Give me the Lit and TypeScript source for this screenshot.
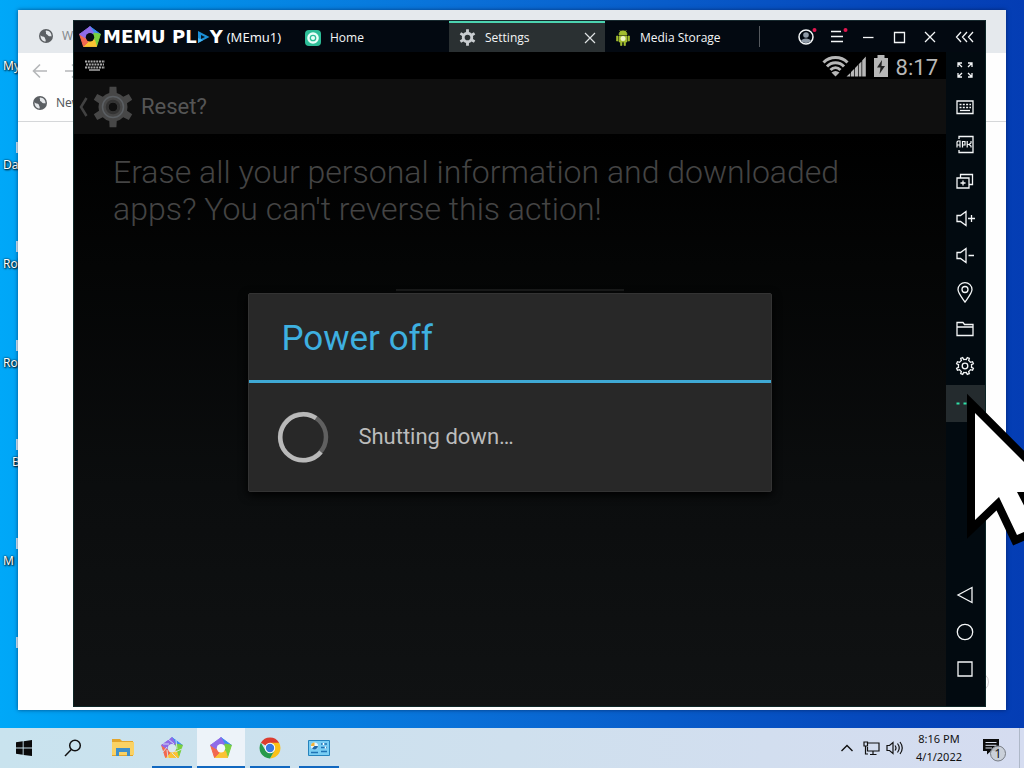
import { LitElement, html, css, svg } from "lit";
import { customElement } from "lit/decorators.js";
import { classMap } from "lit/directives/class-map.js";

/** Outline of a cog wheel centred on (c, c). */
function cog(c: number, outer: number, inner: number, teeth: number, turn = 0): string {
  const step = (Math.PI * 2) / teeth;
  const pt = (r: number, a: number) =>
    `${(c + r * Math.sin(a)).toFixed(2)} ${(c - r * Math.cos(a)).toFixed(2)}`;
  let d = "";
  for (let i = 0; i < teeth; i++) {
    const a = turn + i * step;
    d += `${i ? "L" : "M"}${pt(inner, a - step * 0.25)}L${pt(outer, a - step * 0.16)}`;
    d += `L${pt(outer, a + step * 0.16)}L${pt(inner, a + step * 0.25)}`;
    d += `A${inner} ${inner} 0 0 1 ${pt(inner, a + step * 0.75)}`;
  }
  return d + "Z";
}

const pentagon = (hole: string, streaks = false) => html`<svg width="24" height="24" viewBox="0 0 24 24" aria-hidden="true">
  <g stroke-linejoin="round" stroke-width="1">
    <path d="M12 1.6 22.4 9.2 16 12 9 7z" fill="#3c8df2" stroke="#3c8df2" />
    <path d="M22.4 9.2 18.5 21.4 12 18 15.5 8z" fill="#7ad03f" stroke="#7ad03f" />
    <path d="M18.5 21.4 5.5 21.4 8 14.5 16.5 15z" fill="#fbc233" stroke="#fbc233" />
    <path d="M5.5 21.4 1.6 9.2 7.5 9 10 17z" fill="#f2694f" stroke="#f2694f" />
    <path d="M1.6 9.2 12 1.6 15.5 8 7.5 13z" fill="#8f6be8" stroke="#8f6be8" />
  </g>
  ${streaks
    ? svg`<path d="M8 3 14 8M16 4 17 13M22 13 15 16M17 22 12 17M8 22 7 14M3 16 7 11M3 8 9 8" stroke="#d6e7ef" stroke-width=".9" fill="none" />`
    : null}
  <circle cx="12" cy="12.2" r="4.2" fill=${hole} />
</svg>`;

const globe = html`<svg width="16" height="16" viewBox="0 0 16 16" aria-hidden="true">
  <circle cx="8" cy="8" r="7" fill="#5b5f63" />
  <path d="M2.500 7.200C4 9 6.500 8 6.800 9.700 7 11 8 11 7.700 13.600 4.500 13.500 2.400 10.500 2.500 7.200zM8 2.400C7 3.500 8.500 4 8 5.200 7.500 6.300 9.500 6.200 10 7.500 11 9 12.500 7.500 13.500 8.500 13.800 5 11.500 2.500 8 2.400z" fill="#e4e7ea" />
</svg>`;

const line = (content: unknown) => html`<svg width="22" height="22" viewBox="0 0 22 22" fill="none" stroke="#f4f6f7" stroke-width="1.3" aria-hidden="true">${content}</svg>`;

const sideTools = [
  { name: "Full screen", art: svg`<path d="M4 8V4H8M4 4 8 8M14 4H18V8M18 4 14 8M4 14V18H8M4 18 8 14M18 14V18H14M18 18 14 14" />` },
  { name: "Keyboard mapping", art: svg`<path d="M3 5H19V17.500H3z" /><path d="M5.500 8.500H17M5.500 11.500H17" stroke-dasharray="2 1.300" /><path d="M6 14.500H16" />` },
  { name: "Install APK", art: svg`<path d="M5 6V3.500H19V19.500H5V17" /><path d="M3 14.500V9L4 8H6V14.500M3 12H6M8.500 14.500V8.500H11V12H8.500M13.200 8V14.500M17 8V10L15 11.500 17 13V14.500M13 11.500H15" stroke-width="1.200" />` },
  { name: "Multi-instance", art: svg`<path d="M3 8H15V18H3zM6.500 8V4.500H18.500V14.500H15M9 10.500V15.500M6.500 13H11.500" />` },
  { name: "Volume up", art: svg`<path d="M3 8.500H6.500L12 4.500V18.500L6.500 14.500H3zM14 11.500H21M17.500 8V15" />` },
  { name: "Volume down", art: svg`<path d="M3 8.500H6.500L12 4.500V18.500L6.500 14.500H3zM14.500 11.500H20" />` },
  { name: "Location", art: svg`<path d="M11 21C7 15.500 4 12 4 8.600A7 7 0 0 1 18 8.600C18 12 15 15.500 11 21z" /><circle cx="11" cy="8.500" r="3" />` },
  { name: "Shared folder", art: svg`<path d="M3 17.500V4.500H9L10.500 6.500H19V17.500zM3 9H19" />` },
  { name: "Settings", art: svg`<path d=${cog(11, 8.7, 6.6, 8, Math.PI / 8)} /><circle cx="11" cy="11" r="2.800" />` },
  { name: "More", art: svg`<path d="M2.500 11.500H5.500M9.500 11.500H12.500M16.500 11.500H19.500" stroke="#2fe0a6" stroke-width="2" />` },
];

const navTools = [
  { name: "Back", art: svg`<path d="M18 3.500V18.500L4 11z" />` },
  { name: "Home screen", art: svg`<circle cx="11" cy="11" r="7.700" />` },
  { name: "Recent apps", art: svg`<path d="M4 4H18V18H4z" />` },
];

const windowTools = [
  { name: "Account", art: svg`<circle cx="11" cy="11" r="7" stroke-width="1.500" /><circle cx="11" cy="9" r="2.800" fill="#8f9aa6" stroke="none" /><path d="M6 15C7 11.500 15 11.500 16 15 13.500 17.500 8.500 17.500 6 15z" fill="#8f9aa6" stroke="none" /><circle cx="19.500" cy="4" r="2" fill="#e3174f" stroke="none" />` },
  { name: "Menu", art: svg`<path d="M5 5.500H15M5 10.500H17M5 15.500H17" /><circle cx="19.500" cy="4" r="2" fill="#e3174f" stroke="none" />` },
  { name: "Minimize", art: svg`<path d="M6 11.500H16.500" />` },
  { name: "Maximize", art: svg`<path d="M6.500 6.500H16.500V16.500H6.500z" />` },
  { name: "Close", art: svg`<path d="M6 6 16 16M16 6 6 16" />` },
];

@customElement("app-root")
export class AppRoot extends LitElement {
  static styles = css`
    :host {
      display: flex;
      flex-direction: column;
      height: 100vh;
      overflow: hidden;
      font-family: "Noto Sans", "Open Sans", sans-serif;
      font-size: 12px;
      line-height: 16px;
    }
    * { box-sizing: border-box; }
    svg { display: block; flex: none; }
    button {
      display: flex;
      align-items: center;
      justify-content: center;
      padding: 0;
      margin: 0;
      border: 0;
      background: none;
      color: inherit;
      font: inherit;
    }
    h1, h2, p, ul { margin: 0; padding: 0; font-size: inherit; font-weight: 400; }
    ul { list-style: none; }

    .desktop {
      flex: 1;
      min-height: 0;
      position: relative;
      overflow: hidden;
      background: linear-gradient(90deg, #00a8f8 0, #0098ee 12%, #0a70d8 45%, #0648bc 85%, #043db4 100%);
    }
    .shortcuts { display: flex; flex-direction: column; padding-top: 9px; }
    .shortcut {
      display: flex;
      flex-direction: column;
      justify-content: flex-end;
      height: 99px;
      padding-left: 3px;
      color: #fff;
      text-shadow: 1px 1px 2px #000, 0 0 2px #000;
    }
    .shortcut:first-child { height: 65px; }
    .shortcut.narrow { padding-left: 12px; }
    .badge { width: 12px; height: 11px; margin: 0 0 4px 13px; background: #d9edfa; }
    .narrow .badge { margin-left: 4px; }

    .window { position: absolute; }
    .browser {
      inset: 10px 18px 18px 18px;
      background: #fefefe;
      color: #54585c;
      box-shadow: 0 0 4px rgba(0, 20, 60, 0.6);
    }
    .browser-tabs, .browser-nav, .bookmarks { display: flex; align-items: center; }
    .browser-tabs { height: 43px; padding: 8px 0 0 20px; gap: 8px; background: #e5e9ed; color: #85898d; }
    .browser-nav { height: 35px; padding-left: 14px; gap: 16px; }
    .bookmarks { height: 34px; padding: 0 0 4px 14px; border-bottom: 1px solid #d5d7d9; }
    .bookmarks button { gap: 8px; }
    .resize-dot {
      position: absolute;
      right: 17px;
      bottom: 18px;
      width: 20px;
      height: 20px;
      border: 1px solid #d3cdd0;
      border-radius: 50%;
    }

    .emulator {
      inset: 20px 38px 21px 73px;
      display: flex;
      flex-direction: column;
      background: #01070c;
      border: 1px solid #0d2627;
      border-top-color: #17292e;
      color: #f3f5f6;
    }
    .titlebar { display: flex; height: 31px; flex: none; background: #030911; }
    .brand { display: flex; align-items: center; width: 221px; padding-left: 4px; white-space: nowrap; }
    .brand-name {
      display: flex;
      align-items: center;
      margin: 0 4px 0 1px;
      font: 700 18px/20px "DejaVu Sans", sans-serif;
      color: #fff;
    }
    .instance { font-size: 13px; }
    .tabs { display: flex; flex: 1; min-width: 0; font-family: "Open Sans", "Noto Sans", sans-serif; }
    .tab { display: flex; align-items: center; width: 156px; min-width: 0; padding: 2px 8px 0 10px; }
    .tab:first-child { width: 154px; }
    .tab:last-of-type { width: 154px; }
    .tab-main { flex: 1; justify-content: flex-start; gap: 9px; white-space: nowrap; }
    .tab.active { background: #2a3032; box-shadow: inset 0 2px #4cd3b0; }
    .divider { width: 1px; height: 21px; align-self: center; background: #55595e; }
    .window-tools { display: flex; }
    .window-tools button { width: 31px; }
    .window-tools button:last-child { width: 40px; }

    .emulator-body { display: flex; flex: 1; min-height: 0; }
    .screen {
      flex: 1;
      min-width: 0;
      display: flex;
      flex-direction: column;
      font-family: Roboto, sans-serif;
      background: #000;
    }
    .side { display: flex; flex-direction: column; width: 39px; padding-bottom: 18px; background: #020a10; }
    .side button { height: 37px; flex: none; padding: 0 1px 1px 0; }
    .side .on { background: #242b2e; }
    .spacer { flex: 1; }

    .statusbar {
      display: flex;
      align-items: center;
      height: 27px;
      padding: 0 8px 0 11px;
      color: #b7b7b7;
      background: #000;
    }
    .status-icons { display: flex; align-items: center; gap: 8px; margin-left: auto; }
    .clock { font-size: 22px; line-height: 24px; padding-top: 4px; }
    .stage { flex: 1; min-height: 0; position: relative; background: linear-gradient(#000 55px, #040505 30%, #0b0d0e 65%, #101213); }
    .actionbar {
      display: flex;
      align-items: center;
      height: 55px;
      padding-left: 5px;
      background: #0f0f0f;
      color: #555;
      font-size: 22px;
      line-height: 30px;
    }
    .actionbar button { gap: 4px; margin-right: 7px; }
    .warning { padding: 20px 70px 0 39px; color: #444; font-size: 32px; font-weight: 300; line-height: 37px; }
    .erase { width: 228px; height: 52px; margin: 61px auto 0; background: #070808; border-top: 2px solid #1b1c1c; }
    .overlay { position: absolute; inset: 0; display: grid; place-items: center; }
    .dialog {
      width: 60%;
      background: #282828;
      border: 1px solid #333;
      border-radius: 2px;
      box-shadow: 0 3px 10px #000;
      color: #bcbcbc;
    }
    .dialog-title {
      padding: 23px 32px 19px;
      border-bottom: 3px solid #3fa9d4;
      color: #3eb0e0;
      font-size: 35px;
      line-height: 44px;
    }
    .dialog-body {
      display: flex;
      align-items: center;
      gap: 29px;
      padding: 28px;
      font-size: 22px;
      line-height: 30px;
    }

    .taskbar {
      display: flex;
      height: 40px;
      flex: none;
      color: #111;
      background: linear-gradient(90deg, #c9e3ee, #cfe0ee 50%, #d5dcf0);
    }
    .apps { display: flex; gap: 1px; }
    .apps button { width: 48px; }
    .apps .search { width: 49px; padding-right: 2px; }
    .apps .running { background: linear-gradient(#1168c0, #1168c0) center bottom / 40px 2px no-repeat; }
    .apps .focused { background: linear-gradient(#1168c0, #1168c0) center bottom / 48px 2px no-repeat, #edf3f9; }
    .tray { display: flex; align-items: center; margin-left: auto; padding-right: 4px; }
    .tray button { width: 24px; height: 40px; }
    .tray .date { display: block; width: 64px; line-height: 18px; font-size: 11px; text-align: center; }
    .tray .notes { width: 49px; justify-content: flex-start; padding-left: 11px; border-right: 1px solid #aeb8c8; }

    .pointer { position: absolute; top: 385px; right: -40px; pointer-events: none; }
  `;

  private shortcuts = [
    { label: "My", narrow: false, badge: false },
    { label: "Da", narrow: false, badge: true },
    { label: "Rol", narrow: false, badge: true },
    { label: "Ro", narrow: false, badge: true },
    { label: "B", narrow: true, badge: true },
    { label: "M", narrow: false, badge: true },
  ];

  private browser() {
    return html`<section class="window browser" aria-label="Browser">
      <div class="browser-tabs">${globe}<span>W</span></div>
      <div class="browser-nav">
        <button aria-label="Back"><svg width="16" height="16" viewBox="0 0 16 16" fill="none" stroke="#b5b7b9" stroke-width="1.600"><path d="M15 8H1.500M8 1.500 1.500 8 8 14.500" /></svg></button>
        <button aria-label="Forward"><svg width="16" height="16" viewBox="0 0 16 16" fill="none" stroke="#b5b7b9" stroke-width="1.600"><path d="M1 8H14.500M8 1.500 14.500 8 8 14.500" /></svg></button>
      </div>
      <div class="bookmarks"><button>${globe}<span>New</span></button></div>
      <div class="resize-dot"></div>
    </section>`;
  }

  private titlebar() {
    return html`<header class="titlebar">
      <div class="brand">
        ${pentagon("#060b12")}
        <span class="brand-name"><span>MEMU PL</span><svg width="13" height="14" viewBox="0 0 13 14" aria-hidden="true"><path d="M1 1 12.500 7 1 13z" fill="#1b8fd8" /><path d="M4 5 8 7 4 9z" fill="#05121f" /><path d="M1 13 6 10.300 1 8z" fill="#46b4f0" /></svg><span>Y</span></span>
        <span class="instance">(MEmu1)</span>
      </div>
      <nav class="tabs" aria-label="Open apps">
        <div class="tab"><button class="tab-main"><svg width="16" height="16" viewBox="0 0 16 16"><rect width="16" height="16" rx="4" fill="#2dbd97" /><circle cx="8" cy="8" r="5.800" fill="#e8fff8" /><circle cx="8" cy="8" r="2.700" fill="none" stroke="#2dbd97" stroke-width="1.300" /></svg>Home</button></div>
        <div class="tab active">
          <button class="tab-main"><svg width="17" height="17" viewBox="0 0 18 18"><path fill-rule="evenodd" d="${cog(9, 8.8, 6, 6)}M9 6A3 3 0 1 0 9 12A3 3 0 1 0 9 6z" fill="#c9cdd0" /></svg>Settings</button>
          <button aria-label="Close tab"><svg width="14" height="14" viewBox="0 0 14 14" stroke="#dfe2e3" stroke-width="1.200"><path d="M2 2 12 12M12 2 2 12" /></svg></button>
        </div>
        <div class="tab"><button class="tab-main"><svg width="16" height="16" viewBox="0 0 16 16"><path d="M4 5A4 4.200 0 0 1 12 5zM4 6H12V12H4zM1.500 6H3V11H1.500zM13 6H14.500V11H13zM5.500 12H7V15.500H5.500zM9 12H10.500V15.500H9zM4.500 0 6 2M11.500 0 10 2" fill="#a2bd2f" stroke="#a2bd2f" stroke-width=".6" /><circle cx="8" cy="8.500" r="2.500" fill="#eef5c8" /></svg>Media Storage</button></div>
        <i class="divider"></i>
      </nav>
      <div class="window-tools">
        ${windowTools.map((t) => html`<button aria-label=${t.name}>${line(t.art)}</button>`)}
        <button aria-label="Collapse sidebar">${line(svg`<path d="M7 6 2.500 11 7 16M13 6 8.500 11 13 16M19 6 14.500 11 19 16" />`)}</button>
      </div>
    </header>`;
  }

  private screen() {
    return html`<main class="screen">
      <div class="statusbar">
        <svg width="20" height="11" viewBox="0 0 20 11" stroke="#a9a9a9" stroke-width="2"><path d="M0 1.500H20M1 4.500H19M0 7.500H20" stroke-dasharray="2 .8" /><path d="M4 10H15" stroke-width="1.500" /></svg>
        <div class="status-icons">
          <svg width="44" height="22" viewBox="0 0 44 22"><g fill="none" stroke="#b7b7b7" stroke-width="3"><path d="M1.500 7.500C8 .8 19 .8 25.500 7.500" /><path d="M5 11.500C9.500 6.500 17.500 6.500 22 11.500" /><path d="M8.500 15C11.500 12 15.500 12 18.500 15" /></g><path d="M9.500 17.500C12 15.500 15 15.500 17.500 17.500L13.500 21.500z" fill="#b7b7b7" /><path d="M24.500 21.500 28.300 18V21.500zM29 17 32.300 13.700V21.500H29zM33 13 36 10V21.500H33zM36.700 9.300 39.500 6.500V21.500H36.700zM40.200 5.500 43.800 1.500V21.500H40.200z" fill="#b7b7b7" /></svg>
          <svg width="14" height="22" viewBox="0 0 14 22"><path d="M0 3H3.500V0H10.500V3H14V22H0z" fill="#b7b7b7" /><path d="M8 5 3 12.500H6.500L5.500 19 11 11H7.500z" fill="#222" /></svg>
          <span class="clock">8:17</span>
        </div>
      </div>
      <div class="stage">
        <div class="actionbar">
          <button aria-label="Navigate up"><svg width="9" height="20" viewBox="0 0 9 20" fill="none" stroke="#414141" stroke-width="2.500"><path d="M7.500 1 2 10 7.500 19" /></svg>
            <svg width="42" height="42" viewBox="0 0 42 42"><path fill-rule="evenodd" d="${cog(21, 20.5, 14.5, 6)}M21 16.500A4.500 4.500 0 1 0 21 25.500A4.500 4.500 0 1 0 21 16.500z" fill="#474747" /><circle cx="21" cy="21" r="10.500" fill="none" stroke="#5b5f63" stroke-width="1.500" /><circle cx="21" cy="21" r="6" fill="none" stroke="#333" stroke-width="2.500" /></svg>
          </button>
          <h1>Reset?</h1>
        </div>
        <p class="warning">Erase all your personal information and downloaded apps? You can't reverse this action!</p>
        <div class="erase"></div>
        <div class="overlay">
          <div class="dialog" role="dialog" aria-label="Power off">
            <h2 class="dialog-title">Power off</h2>
            <div class="dialog-body">
              <svg width="52" height="52" viewBox="0 0 52 52" fill="none" stroke-width="4.500" aria-hidden="true"><circle cx="26" cy="26" r="23" stroke="#606060" /><path d="M44 41A23 23 0 1 1 39 7.200" stroke="#b9b9b9" /></svg>
              <p>Shutting down…</p>
            </div>
          </div>
        </div>
      </div>
    </main>`;
  }

  private taskbar() {
    return html`<footer class="taskbar">
      <nav class="apps" aria-label="Taskbar">
        <button aria-label="Start"><svg width="16" height="16" viewBox="0 0 16 16"><path d="M0 2.300 6.700 1.300V7.600H0zM7.600 1.200 16 0V7.600H7.600zM0 8.500H6.700V14.800L0 13.800zM7.600 8.500H16V16L7.600 14.900z" fill="#0a0a0a" /></svg></button>
        <button class="search" aria-label="Search"><svg width="18" height="18" viewBox="0 0 18 18" fill="none" stroke="#111" stroke-width="1.500"><circle cx="11" cy="6.500" r="5.300" /><path d="M7.300 10.500 1 17" /></svg></button>
        <button aria-label="File Explorer"><svg width="24" height="22" viewBox="0 0 24 22"><path d="M1 2H9L11 4H22V19H1z" fill="#e3a52b" /><path d="M1 5H23V18H1z" fill="#fad264" /><path d="M5 11H19V19H16V15H8V19H5z" fill="#3f8fc9" /></svg></button>
        <button class="running" aria-label="Multi-instance manager">${pentagon("#d6e7ef", true)}</button>
        <button class="focused" aria-label="Emulator">${pentagon("#f4f7fb")}</button>
        <button class="running" aria-label="Chrome"><svg width="22" height="22" viewBox="0 0 22 22"><path d="M11 11 1.900 5.800A10.500 10.500 0 0 1 20.100 5.800z" fill="#dc3d2f" /><path d="M11 5.800H20.100A10.500 10.500 0 0 1 11 21.500L15.500 13.500z" fill="#fbc116" /><path d="M1.900 5.800A10.500 10.500 0 0 0 11 21.500L15.500 13.500H6.500z" fill="#279a4b" /><circle cx="11" cy="11" r="5.200" fill="#fff" /><circle cx="11" cy="11" r="4.200" fill="#3a78e0" /></svg></button>
        <button class="running" aria-label="Control Panel"><svg width="22" height="16" viewBox="0 0 22 16"><path d="M.5.5H21.500V15.500H.5z" fill="#79cdf3" stroke="#2583bd" /><circle cx="6.500" cy="6" r="3.600" fill="#e9f7ff" /><path d="M6.500 6V2.400A3.600 3.600 0 0 0 3 6z" fill="#f0b23a" /><path d="M6.500 6H10A3.600 3.600 0 0 1 4 8.500z" fill="#1d68a8" /><path d="M3 12.500H10M13 4H19M13 7.500H19M13 11.500H19" stroke="#1f73b5" stroke-width="1.500" /><path d="M15.500 3V5M17.500 6.500V8.500" stroke="#fff" stroke-width="1.500" /></svg></button>
      </nav>
      <div class="tray">
        <button aria-label="Show hidden icons"><svg width="12" height="8" viewBox="0 0 12 8" fill="none" stroke="#111" stroke-width="1.400"><path d="M.5 7 6 1.500 11.500 7" /></svg></button>
        <button aria-label="Network"><svg width="17" height="15" viewBox="0 0 17 15" fill="none" stroke="#111" stroke-width="1.200"><path d="M4.500 2H16V10H4.500V6M7 13.500H13.500M10 10V13.500M1 1H4.500V5H1zM2.500 5V13H5" /></svg></button>
        <button aria-label="Volume"><svg width="18" height="16" viewBox="0 0 18 16" fill="none" stroke="#111" stroke-width="1.200"><path d="M1 5.500H3.500L7 2.500V13.500L3.500 10.500H1zM9 5.500Q11 8 9 10.500M11.500 3.500Q15 8 11.500 12.500M14 2Q18.500 8 14 14" /></svg></button>
        <button class="date">8:16 PM<br />4/1/2022</button>
        <button class="notes" aria-label="1 notification"><svg width="26" height="28" viewBox="0 0 26 28"><path d="M1 5H17V17H9L5 20.500V17H1z" fill="#0c0c0c" /><path d="M3.500 8.500H14.500M3.500 11.300H14.500M3.500 14H10" stroke="#dbe1f0" /><circle cx="16" cy="19.500" r="7.500" fill="#c9ced6" fill-opacity=".9" stroke="#777c84" /><text x="16" y="24" text-anchor="middle" font-size="12" fill="#111">1</text></svg></button>
      </div>
    </footer>`;
  }

  render() {
    return html`
      <div class="desktop">
        <ul class="shortcuts">
          ${this.shortcuts.map(
            (s) => html`<li class=${classMap({ shortcut: true, narrow: s.narrow })}>
              ${s.badge ? html`<i class="badge"></i>` : null}<span>${s.label}</span>
            </li>`
          )}
          <li class="shortcut"><i class="badge"></i><span>&nbsp;</span></li>
        </ul>
        ${this.browser()}
        <section class="window emulator" aria-label="Emulator">
          ${this.titlebar()}
          <div class="emulator-body">
            ${this.screen()}
            <aside class="side">
              ${sideTools.map((t) => html`<button class=${classMap({ on: t.name === "More" })} aria-label=${t.name}>${line(t.art)}</button>`)}
              <div class="spacer"></div>
              ${navTools.map((t) => html`<button aria-label=${t.name}>${line(t.art)}</button>`)}
            </aside>
          </div>
        </section>
        <svg class="pointer" width="104" height="170" viewBox="0 0 104 170" aria-hidden="true">
          <path d="M15 28 94 107H57L75 142 57 150 39 112 15 135z" fill="#fff" stroke="#000" stroke-width="16" stroke-miterlimit="10" paint-order="stroke" />
        </svg>
      </div>
      ${this.taskbar()}
    `;
  }
}
